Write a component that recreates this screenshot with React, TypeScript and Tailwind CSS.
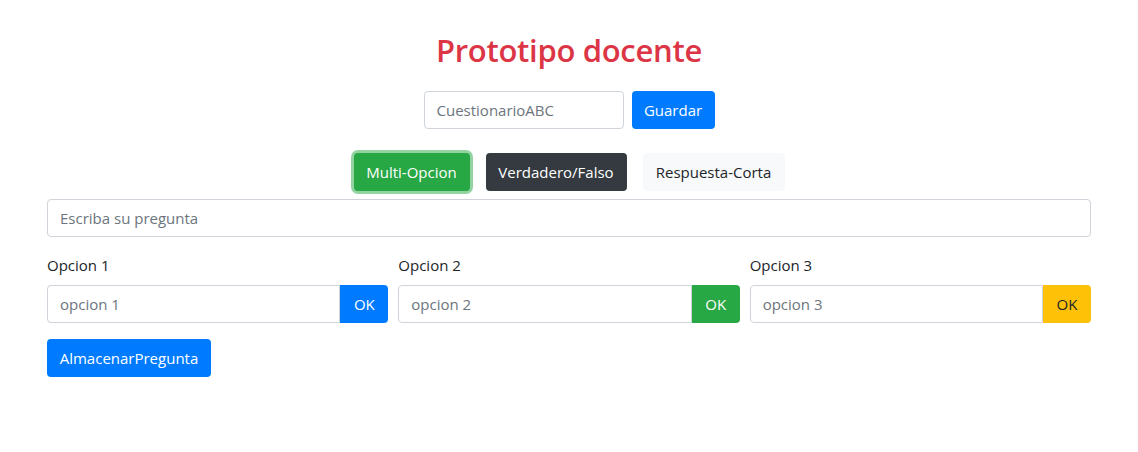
import React from 'react';

const font = { fontFamily: '"Open Sans", "Noto Sans", sans-serif' };

function OptionField({ label, placeholder, btn }: { label: string; placeholder: string; btn: string }) {
  return (
    <div>
      <label className="block h-6 leading-6 text-[15px] text-[#212529] mb-2">{label}</label>
      <div className="flex h-[38px]">
        <input
          placeholder={placeholder}
          className="flex-1 min-w-0 h-full border border-[#ced4da] rounded-l-[4px] px-3 text-[15px] text-[#495057] placeholder-[#6c757d] outline-none"
        />
        <button className={`w-[48px] h-full rounded-r-[4px] text-[15px] ${btn}`}>OK</button>
      </div>
    </div>
  );
}

export default function App() {
  return (
    <div className="min-h-screen bg-white px-[47px] text-[#212529]" style={font}>
      {/* Title */}
      <h1 className="pt-[26px] h-[74px] text-center text-[31px] leading-[48px] font-semibold tracking-[-0.3px] text-[#dc3545]">
        Prototipo docente
      </h1>

      {/* Quiz name */}
      <div className="mt-[17px] flex justify-center gap-2">
        <input
          placeholder="CuestionarioABC"
          className="w-[200px] h-[38px] border border-[#ced4da] rounded-[4px] px-3 text-[15px] placeholder-[#6c757d] outline-none"
        />
        <button className="w-[83px] h-[38px] rounded-[4px] bg-[#007bff] text-white text-[15px]">Guardar</button>
      </div>

      {/* Question types */}
      <div className="mt-6 flex justify-center gap-4">
        <button className="w-[116px] h-[38px] rounded-[4px] bg-[#28a745] text-white text-[15px] shadow-[0_0_0_3px_rgba(40,167,69,0.5)]">
          Multi-Opcion
        </button>
        <button className="w-[141px] h-[38px] rounded-[4px] bg-[#343a40] text-white text-[15px]">
          Verdadero/Falso
        </button>
        <button className="w-[142px] h-[38px] rounded-[4px] bg-[#f8f9fa] text-[#212529] text-[15px]">
          Respuesta-Corta
        </button>
      </div>

      {/* Question */}
      <input
        placeholder="Escriba su pregunta"
        className="mt-2 block w-full h-[38px] border border-[#ced4da] rounded-[4px] px-3 text-[15px] placeholder-[#6c757d] outline-none"
      />

      {/* Options */}
      <div className="mt-4 grid grid-cols-3 gap-x-[10px]">
        <OptionField label="Opcion 1" placeholder="opcion 1" btn="bg-[#007bff] text-white" />
        <OptionField label="Opcion 2" placeholder="opcion 2" btn="bg-[#28a745] text-white" />
        <OptionField label="Opcion 3" placeholder="opcion 3" btn="bg-[#ffc107] text-[#212529]" />
      </div>

      <button className="mt-4 w-[164px] h-[38px] rounded-[4px] bg-[#007bff] text-white text-[15px]">
        AlmacenarPregunta
      </button>
    </div>
  );
}
